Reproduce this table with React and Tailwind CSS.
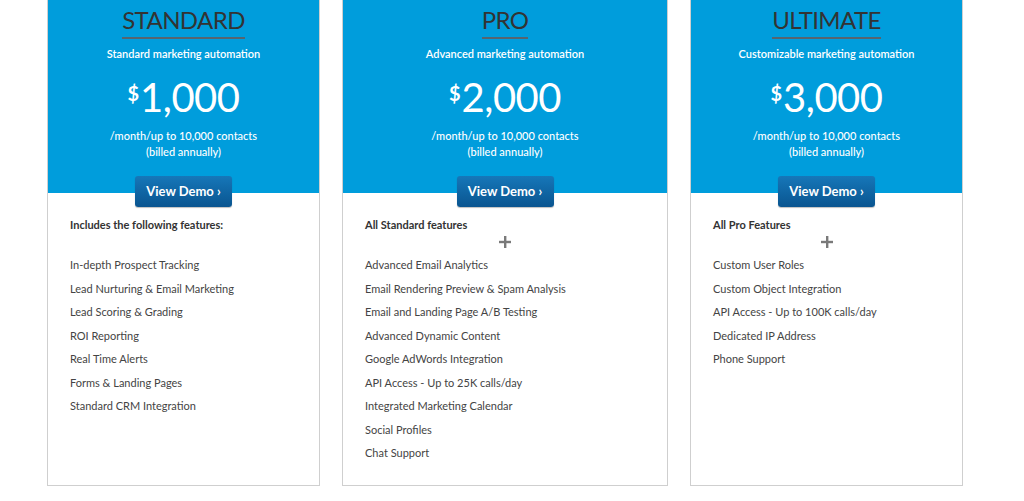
const plans = [
  {
    name: 'STANDARD',
    tagline: 'Standard marketing automation',
    price: '1,000',
    width: 'w-[273px]',
    heading: 'Includes the following features:',
    plus: false,
    features: [
      'In-depth Prospect Tracking',
      'Lead Nurturing & Email Marketing',
      'Lead Scoring & Grading',
      'ROI Reporting',
      'Real Time Alerts',
      'Forms & Landing Pages',
      'Standard CRM Integration',
    ],
  },
  {
    name: 'PRO',
    tagline: 'Advanced marketing automation',
    price: '2,000',
    width: 'w-[326px]',
    heading: 'All Standard features',
    plus: true,
    features: [
      'Advanced Email Analytics',
      'Email Rendering Preview & Spam Analysis',
      'Email and Landing Page A/B Testing',
      'Advanced Dynamic Content',
      'Google AdWords Integration',
      'API Access - Up to 25K calls/day',
      'Integrated Marketing Calendar',
      'Social Profiles',
      'Chat Support',
    ],
  },
  {
    name: 'ULTIMATE',
    tagline: 'Customizable marketing automation',
    price: '3,000',
    width: 'w-[273px]',
    heading: 'All Pro Features',
    plus: true,
    features: [
      'Custom User Roles',
      'Custom Object Integration',
      'API Access - Up to 100K calls/day',
      'Dedicated IP Address',
      'Phone Support',
    ],
  },
]

function PlanCard({ plan }) {
  return (
    <div className={`${plan.width} h-[486px] border border-t-0 border-[#cfcfcf] bg-white flex flex-col`}>
      <div className="bg-[#009ddc] flex flex-col items-center pt-[5px]">
        <div className="text-[24px] leading-[30px] text-[#333] tracking-[-0.6px] pb-[2px] border-b-2 border-[#56656f]">
          {plan.name}
        </div>
        <div className="mt-[7px] text-[11px] leading-[16px] font-semibold text-white">{plan.tagline}</div>
        <div className="mt-[14px] flex items-start text-white">
          <span className="text-[20px] leading-[20px] font-bold mt-[7px] mr-[1px]">$</span>
          <span className="text-[40px] leading-[42px] tracking-[-0.5px]">{plan.price}</span>
        </div>
        <div className="mt-[10px] text-[11px] leading-[16px] font-medium text-white text-center">
          /month/up to 10,000 contacts
          <br />
          (billed annually)
        </div>
        <button className="relative z-10 mt-[16px] -mb-[14px] w-[97px] h-[31px] rounded-[3px] bg-gradient-to-b from-[#1677b9] to-[#0a5590] text-white text-[13px] font-bold shadow-[0_1px_1px_rgba(0,0,0,0.25)]">
          View Demo ›
        </button>
      </div>
      <div className="pt-[24px] px-[22px]">
        <div className="text-[11px] leading-[16px] font-bold text-[#333]">{plan.heading}</div>
        <div className="h-[18px] flex items-center justify-center">
          {plan.plus && (
            <svg width="12" height="12" viewBox="0 0 12 12">
              <rect x="5" y="0" width="2.4" height="12" fill="#7a7a7a" />
              <rect x="0" y="4.8" width="12" height="2.4" fill="#7a7a7a" />
            </svg>
          )}
        </div>
        <ul className="mt-[2px]">
          {plan.features.map((f) => (
            <li key={f} className="text-[11px] leading-[23.5px] text-[#444]">
              {f}
            </li>
          ))}
        </ul>
      </div>
    </div>
  )
}

export default function App() {
  return (
    <div className="w-[1024px] h-[501px] bg-white pl-[47px] flex gap-[22px]" style={{ fontFamily: 'Lato, "Open Sans", sans-serif' }}>
      {plans.map((p) => (
        <PlanCard key={p.name} plan={p} />
      ))}
    </div>
  )
}
